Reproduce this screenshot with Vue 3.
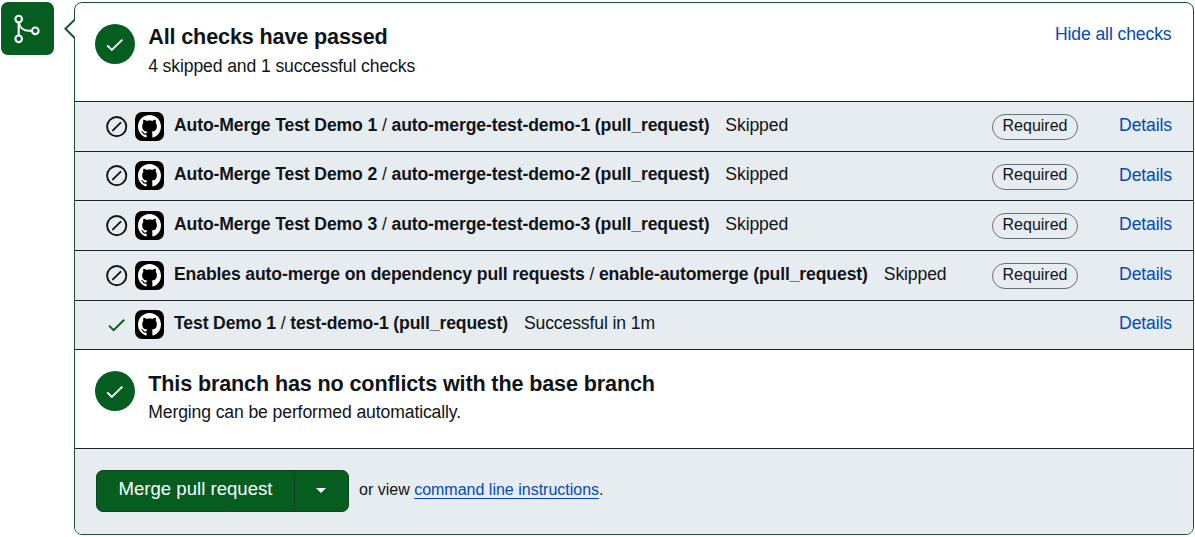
<script setup>
const checks = [
  { name: 'Auto-Merge Test Demo 1', job: 'auto-merge-test-demo-1 (pull_request)', status: 'Skipped', required: true },
  { name: 'Auto-Merge Test Demo 2', job: 'auto-merge-test-demo-2 (pull_request)', status: 'Skipped', required: true },
  { name: 'Auto-Merge Test Demo 3', job: 'auto-merge-test-demo-3 (pull_request)', status: 'Skipped', required: true },
  { name: 'Enables auto-merge on dependency pull requests', job: 'enable-automerge (pull_request)', status: 'Skipped', required: true },
  { name: 'Test Demo 1', job: 'test-demo-1 (pull_request)', status: 'Successful in 1m', required: false },
]
</script>

<template>
  <main class="page">
    <div class="badge">
      <svg width="53" height="53" viewBox="0 0 53 53" fill="none" stroke="#fff" stroke-width="2.1">
        <circle cx="17.7" cy="17.1" r="3.3" />
        <circle cx="17.7" cy="36.8" r="3.3" />
        <circle cx="34.3" cy="28.8" r="3.3" />
        <path d="M17.7 20.5v13M17.7 20.5c1 5 5 8.3 10 8.3h3.2" />
      </svg>
    </div>
    <section class="card">
      <svg class="caret" width="11" height="20" viewBox="0 0 11 20">
        <path d="M11 0.4L1.4 9.8L11 19.2" fill="#fff" stroke="#1b5332" stroke-width="2" />
      </svg>
      <header class="summary">
        <span class="disc">
          <svg width="40" height="40" viewBox="0 0 40 40"><path d="M12.2 21.4l4.6 4.6L27.4 15.6" fill="none" stroke="#fff" stroke-width="1.9" /></svg>
        </span>
        <div class="copy">
          <h3>All checks have passed</h3>
          <p>4 skipped and 1 successful checks</p>
        </div>
        <a class="toggle">Hide all checks</a>
      </header>
      <ul class="checks">
        <li v-for="c in checks" :key="c.name">
          <svg v-if="c.required" class="state" width="22" height="22" viewBox="0 0 22 22" fill="none" stroke="#101418" stroke-width="1.9">
            <circle cx="10.7" cy="10.6" r="9.6" /><path d="M6.9 14.4l7.6-7.6" stroke-linecap="round" />
          </svg>
          <svg v-else class="state" width="22" height="22" viewBox="0 0 22 22"><path d="M3 11.6l4.6 4.6L18.2 5.8" fill="none" stroke="#055d20" stroke-width="1.9" /></svg>
          <span class="avatar">
            <svg width="23" height="23" viewBox="0 0 16 16" fill="#fff"><path d="M8 0C3.58 0 0 3.58 0 8c0 3.54 2.29 6.53 5.47 7.59.4.07.55-.17.55-.38 0-.19-.01-.82-.01-1.49-2.01.37-2.53-.49-2.69-.94-.09-.23-.48-.94-.82-1.13-.28-.15-.68-.52-.01-.53.63-.01 1.08.58 1.23.82.72 1.21 1.87.87 2.33.66.07-.52.28-.87.51-1.07-1.78-.2-3.64-.89-3.64-3.95 0-.87.31-1.59.82-2.15-.08-.2-.36-1.02.08-2.12 0 0 .67-.21 2.2.82.64-.18 1.32-.27 2-.27s1.36.09 2 .27c1.53-1.04 2.2-.82 2.2-.82.44 1.1.16 1.92.08 2.12.51.56.82 1.27.82 2.15 0 3.07-1.87 3.75-3.65 3.95.29.25.54.73.54 1.48 0 1.07-.01 1.93-.01 2.2 0 .21.15.46.55.38A8.01 8.01 0 0 0 16 8c0-4.42-3.58-8-8-8z" /></svg>
          </span>
          <span class="name"><b>{{ c.name }}</b> / <b>{{ c.job }}</b></span>
          <span class="status">{{ c.status }}</span>
          <span v-if="c.required" class="required">Required</span>
          <a class="details">Details</a>
        </li>
      </ul>
      <div class="summary conflicts">
        <span class="disc">
          <svg width="40" height="40" viewBox="0 0 40 40"><path d="M12.2 21.4l4.6 4.6L27.4 15.6" fill="none" stroke="#fff" stroke-width="1.9" /></svg>
        </span>
        <div class="copy">
          <h3>This branch has no conflicts with the base branch</h3>
          <p>Merging can be performed automatically.</p>
        </div>
      </div>
      <footer class="actions">
        <div class="group">
          <button class="merge">Merge pull request</button>
          <button class="more"><svg width="10" height="5" viewBox="0 0 10 5"><path d="M0 0h10L5 5z" fill="#fff" /></svg></button>
        </div>
        <p>or view <a>command line instructions</a>.</p>
      </footer>
    </section>
  </main>
</template>

<style>
body { background: #fff; }
</style>

<style scoped>
* { box-sizing: border-box; }
.page {
  display: flex;
  height: 537px;
  padding: 2px 1px 0 1px;
  overflow: hidden;
  font-family: "Liberation Sans", Arial, sans-serif;
  font-size: 17.6px;
  letter-spacing: -0.12px;
  line-height: 20px;
  color: #101418;
}
h3, p, ul { margin: 0; padding: 0; }
a { color: #0349b4; white-space: nowrap; }
.badge { width: 53px; height: 53px; flex: none; border-radius: 7px; background: #055d20; }
.badge svg { display: block; }
.card {
  position: relative;
  width: 1120px;
  height: 533px;
  flex: none;
  margin-left: 20px;
  border: 1px solid #1b5332;
  border-radius: 8px;
}
.caret { position: absolute; left: -11px; top: 16px; }
.summary { display: flex; height: 98px; padding: 21px 21.5px 0 20px; }
.disc { width: 40px; height: 40px; flex: none; border-radius: 50%; background: #055d20; }
.disc svg { display: block; }
.copy { flex: 1; margin-left: 13.2px; white-space: nowrap; }
h3 { font-size: 21.6px; line-height: 26px; letter-spacing: -0.14px; }
.copy p { margin-top: 6px; }
.checks { list-style: none; background: #e7ecf0; }
li { display: flex; height: 50px; padding: 10px 21px 0 31px; border-top: 1px solid #1d242c; white-space: nowrap; }
li:nth-child(2), li:nth-child(5) { height: 49px; padding-top: 9px; }
.state { flex: none; margin-top: 4px; }
.avatar { display: flex; align-items: center; justify-content: center; width: 29px; height: 29px; flex: none; margin-left: 7px; border-radius: 7px; background: #000; }
.name { margin: 3px 0 0 10px; }
.name b { letter-spacing: -0.127px; }
.status { margin: 3px 0 0 16px; }
.required { width: 86px; height: 26px; margin: 2px 0 0 auto; border: 1px solid #66707b; border-radius: 13px; text-align: center; font-size: 16px; letter-spacing: 0; line-height: 21px; }
li:nth-child(2) .required { margin-top: 3px; line-height: 20px; }
.details { width: 53px; margin: 3px 0 0 41px; text-align: right; }
li:nth-child(2) .details { margin-top: 4px; }
li:last-child .details { margin-left: auto; }
.conflicts { height: 99px; border-top: 1px solid #1d242c; }
.conflicts .copy p { margin-top: 5px; }
.actions { display: flex; height: 86px; padding: 21px 0 0 21px; border-top: 1px solid #1d242c; border-radius: 0 0 7px 7px; background: #e7ecf0; }
.group { display: flex; width: 253px; height: 42px; border: 1px solid #0a4420; border-radius: 7px; background: #055d20; }
button { padding: 0; border: 0; background: none; color: #fff; font: inherit; letter-spacing: 0; }
.merge { width: 198px; padding-bottom: 5px; border-right: 1px solid #0a4420; font-size: 18.6px; }
.more { display: flex; flex: 1; align-items: center; justify-content: center; padding: 0 2px 1px 0; }
.actions p { margin: 10px 0 0 10px; font-size: 16px; letter-spacing: 0; }
.actions p a { border-bottom: 1px solid #0349b4; }
</style>
